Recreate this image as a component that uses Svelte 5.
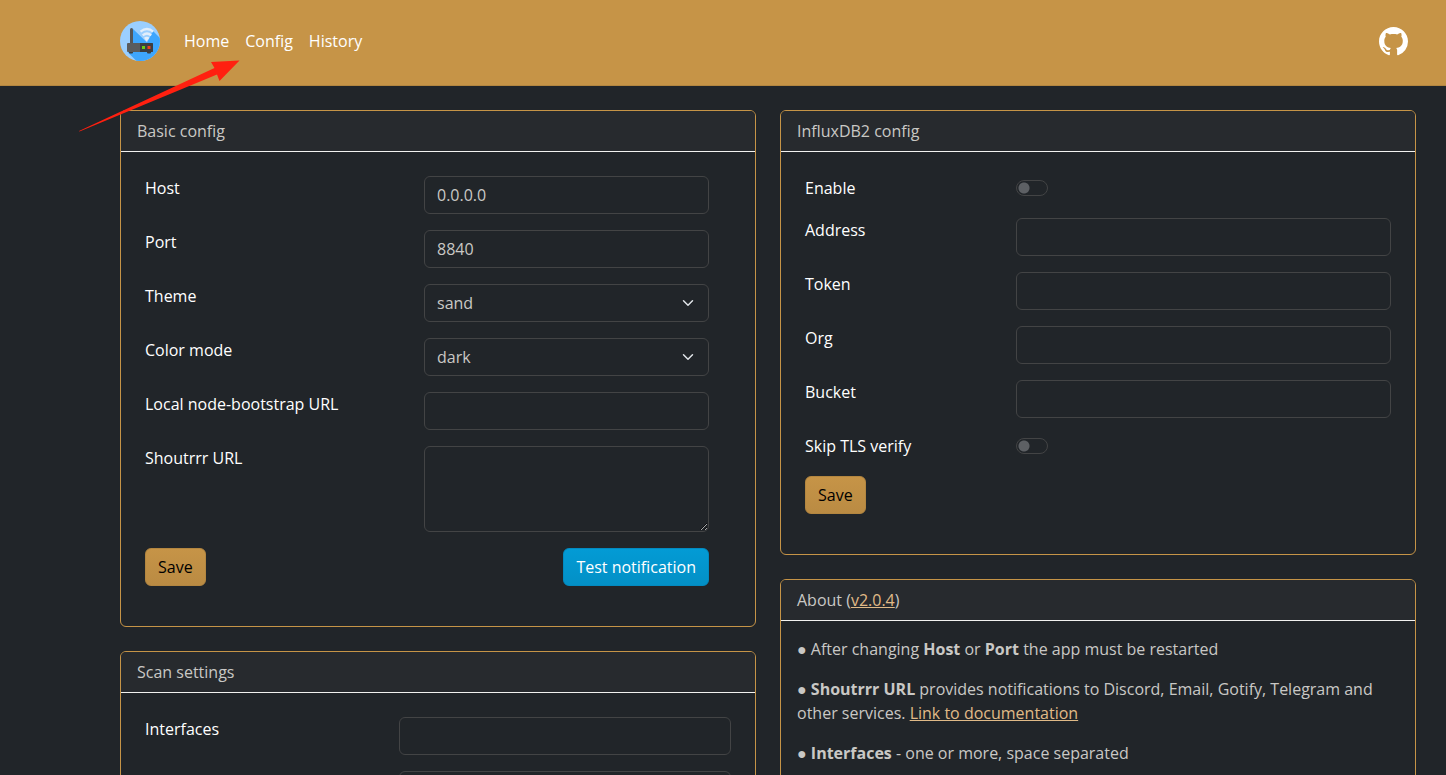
<script>
  let basic = $state({
    host: '0.0.0.0',
    port: '8840',
    theme: 'sand',
    color: 'dark',
    nodePath: '',
    shout: '',
  });

  let influx = $state({ enable: false, addr: '', token: '', org: '', bucket: '', skipTls: false });

  let ifaces = $state('');
  let args = $state('');

  const themes = ['sand', 'grass', 'emerald', 'ocean'];
  const modes = ['dark', 'light'];

  const influxFields = [
    { key: 'addr', label: 'Address' },
    { key: 'token', label: 'Token' },
    { key: 'org', label: 'Org' },
    { key: 'bucket', label: 'Bucket' },
  ];

  function save(event) {
    event.preventDefault();
  }
</script>

<div class="page">
  <header class="navbar">
    <a class="brand" href="#/" aria-label="Home page">
      <svg width="40" height="40" viewBox="0 0 40 40" aria-hidden="true">
        <defs>
          <clipPath id="disc"><circle cx="20" cy="20" r="20" /></clipPath>
        </defs>
        <g clip-path="url(#disc)">
          <rect width="40" height="40" fill="#9bcfff" />
          <path d="M12.5 7.5 L27 21.500 L33 10 L42 19 V42 H18.5 L8 31.5 L12 22 Z" fill="#3ea6fd" />
        </g>
        <g fill="none" stroke="#e3eefa" stroke-width="2.2">
          <path d="M20.5 10.7 Q27 5.3 33.200 10.7" />
          <path d="M22.7 14.4 Q27 10.6 31.2 14.4" />
        </g>
        <path d="M24 16.7 Q27 14.7 29.5 16.7 L26.5 20.500 Z" fill="#e3eefa" />
        <rect x="10" y="7" width="3" height="16" rx="1.5" fill="#54575a" />
        <rect x="9" y="30" width="4" height="2.5" rx="1" fill="#3c3e40" />
        <rect x="27" y="30" width="4" height="2.5" rx="1" fill="#3c3e40" />
        <rect x="7" y="22" width="26" height="9" rx="1" fill="#5a5c5e" />
        <path d="M20 22 H32 a1 1 0 0 1 1 1 V30 a1 1 0 0 1 -1 1 H20 Z" fill="#3c3e40" />
        <rect x="22" y="25" width="3" height="3" fill="#6ccb14" />
        <rect x="27.5" y="25" width="3" height="3" fill="#f0401c" />
      </svg>
    </a>
    <nav>
      <a href="#/">Home</a>
      <a href="#/config">Config</a>
      <a href="#/history">History</a>
    </nav>
    <a class="github" href="#/github" aria-label="GitHub">
      <svg width="29" height="29" viewBox="0 0 16 16" fill="currentColor" aria-hidden="true">
        <path
          d="M8 0C3.58 0 0 3.58 0 8c0 3.54 2.29 6.53 5.47 7.59.4.07.55-.17.55-.38 0-.19-.01-.82-.01-1.49-2.01.37-2.53-.49-2.69-.94-.09-.23-.48-.94-.82-1.13-.28-.15-.68-.52-.01-.53.63-.01 1.08.58 1.23.82.72 1.21 1.87.87 2.33.66.07-.52.28-.87.51-1.07-1.78-.2-3.64-.89-3.64-3.95 0-.87.31-1.59.82-2.15-.08-.2-.36-1.02.08-2.12 0 0 .67-.21 2.2.82.64-.18 1.32-.27 2-.27s1.36.09 2 .27c1.53-1.04 2.2-.82 2.2-.82.44 1.1.16 1.92.08 2.12.51.56.82 1.27.82 2.15 0 3.07-1.87 3.75-3.65 3.95.29.25.54.73.54 1.48 0 1.07-.01 1.93-.01 2.2 0 .21.15.46.55.38A8.01 8.01 0 0 0 16 8c0-4.42-3.58-8-8-8"
        />
      </svg>
    </a>
  </header>

  <main>
    <div class="column">
      <section class="card">
        <h2>Basic config</h2>
        <form class="form basic" onsubmit={save}>
          <label for="host">Host</label>
          <input id="host" class="control" type="text" bind:value={basic.host} />
          <label for="port">Port</label>
          <input id="port" class="control" type="text" bind:value={basic.port} />
          <label for="theme">Theme</label>
          <select id="theme" class="control" bind:value={basic.theme}>
            {#each themes as theme}
              <option value={theme}>{theme}</option>
            {/each}
          </select>
          <label for="color">Color mode</label>
          <select id="color" class="control" bind:value={basic.color}>
            {#each modes as mode}
              <option value={mode}>{mode}</option>
            {/each}
          </select>
          <label for="node">Local node-bootstrap URL</label>
          <input id="node" class="control" type="text" bind:value={basic.nodePath} />
          <label for="shout">Shoutrrr URL</label>
          <textarea id="shout" class="control" rows="3" bind:value={basic.shout}></textarea>
          <div class="actions">
            <button class="btn primary" type="submit">Save</button>
            <button class="btn info" type="button">Test notification</button>
          </div>
        </form>
      </section>

      <section class="card">
        <h2>Scan settings</h2>
        <form class="form scan" onsubmit={save}>
          <label for="ifaces">Interfaces</label>
          <input id="ifaces" class="control" type="text" bind:value={ifaces} />
          <span></span>
          <input class="control" type="text" aria-label="Arguments" bind:value={args} />
        </form>
      </section>
    </div>

    <div class="column">
      <section class="card">
        <h2>InfluxDB2 config</h2>
        <form class="form influx" onsubmit={save}>
          <label for="enable">Enable</label>
          <div class="switch-cell">
            <input id="enable" class="switch" type="checkbox" bind:checked={influx.enable} />
          </div>
          {#each influxFields as field}
            <label for={field.key}>{field.label}</label>
            <input id={field.key} class="control" type="text" bind:value={influx[field.key]} />
          {/each}
          <label for="skip-tls">Skip TLS verify</label>
          <div class="switch-cell">
            <input id="skip-tls" class="switch" type="checkbox" bind:checked={influx.skipTls} />
          </div>
          <div class="actions">
            <button class="btn primary" type="submit">Save</button>
          </div>
        </form>
      </section>

      <section class="card">
        <h2>About (<a href="#/version">v2.0.4</a>)</h2>
        <div class="about">
          <p>● After changing <b>Host</b> or <b>Port</b> the app must be restarted</p>
          <p>
            ● <b>Shoutrrr URL</b> provides notifications to Discord, Email, Gotify, Telegram and other
            services. <a href="#/docs">Link to documentation</a>
          </p>
          <p>● <b>Interfaces</b> - one or more, space separated</p>
        </div>
      </section>
    </div>
  </main>

  <!-- Pointer towards the Config link -->
  <svg class="pointer" width="162" height="72" viewBox="0 0 162 72" aria-hidden="true">
    <path d="M0 71 L135.5 8 L132 2 L160.5 0.5 L140.5 21 L138 14.5 L0.5 71.5 Z" fill="#ff2010" />
  </svg>
</div>

<style>
  :global(body) {
    margin: 0;
    background: #212529;
  }

  .page {
    --primary: #c69447;
    --text: #c9c8c5;
    --border: #434445;
    position: relative;
    height: 100vh;
    overflow: hidden;
    background: #212529;
    color: var(--text);
    font-family: 'Open Sans', 'Noto Sans', sans-serif;
    font-size: 16px;
    line-height: 24px;
  }

  .navbar {
    display: flex;
    align-items: center;
    padding: 21px 38px 24px 120px;
    background: var(--primary);
    border-bottom: 1px solid #b38640;
  }

  .navbar a {
    color: #fff;
    text-decoration: none;
  }

  .navbar svg {
    display: block;
  }

  nav {
    display: flex;
    flex: 1;
    gap: 16px;
    margin-left: 24px;
  }

  main {
    display: grid;
    grid-template-columns: 1fr 1fr;
    gap: 24px;
    padding: 24px 30px 24px 120px;
  }

  .column {
    display: flex;
    flex-direction: column;
    gap: 24px;
    min-width: 0;
  }

  .card {
    border: 1px solid var(--primary);
    border-radius: 6px;
    overflow: hidden;
  }

  .card h2 {
    margin: 0;
    padding: 8px 16px;
    border-bottom: 1px solid #f2f2f0;
    background: #272a2e;
    font-size: 16px;
    font-weight: 400;
  }

  .card a {
    color: #e0ba87;
  }

  .form {
    display: grid;
    align-items: start;
    row-gap: 16px;
    padding: 24px 24px 40px;
  }

  .basic {
    grid-template-columns: 279fr 285fr;
    padding-right: 46px;
  }

  .scan {
    grid-template-columns: 254fr 332fr;
  }

  .influx {
    grid-template-columns: 211fr 375fr;
  }

  .form label {
    color: #fff;
  }

  .control {
    display: block;
    box-sizing: border-box;
    width: 100%;
    min-height: 38px;
    margin: 0;
    padding: 6px 12px;
    border: 1px solid var(--border);
    border-radius: 6px;
    background-color: #212529;
    color: var(--text);
    font: inherit;
    appearance: none;
  }

  select.control {
    padding-right: 36px;
    background-image: url("data:image/svg+xml,%3Csvg xmlns='http://www.w3.org/2000/svg' viewBox='0 0 16 16'%3E%3Cpath fill='none' stroke='%23dee2e6' stroke-linecap='round' stroke-linejoin='round' stroke-width='2' d='m2 5 6 6 6-6'/%3E%3C/svg%3E");
    background-repeat: no-repeat;
    background-position: right 12px center;
    background-size: 16px 12px;
  }

  textarea.control {
    height: 86px;
    resize: vertical;
  }

  .switch-cell {
    display: flex;
    align-items: center;
    height: 26px;
  }

  .switch {
    width: 32px;
    height: 16px;
    margin: 0 0 2px;
    border: 1px solid var(--border);
    border-radius: 16px;
    background: radial-gradient(circle at 7px 7px, #5d6064 5px, transparent 6px);
    appearance: none;
  }

  .switch:checked {
    background: radial-gradient(circle at 23px 7px, #fff 5px, transparent 6px) var(--primary);
  }

  .actions {
    grid-column: 1 / -1;
    display: flex;
    justify-content: space-between;
  }

  .btn {
    padding: 6px 12px;
    border: 1px solid;
    border-radius: 6px;
    font: inherit;
    cursor: pointer;
  }

  .primary {
    border-color: #b38640;
    background: linear-gradient(#c69447, #ba8b43);
    color: #000;
  }

  .info {
    border-color: #028ac0;
    background: linear-gradient(#039bd5, #0390c6);
    color: #fff;
  }

  .about {
    padding: 16px;
  }

  .about p {
    margin: 0 0 16px;
  }

  .pointer {
    position: absolute;
    top: 60px;
    left: 79px;
    pointer-events: none;
  }
</style>
